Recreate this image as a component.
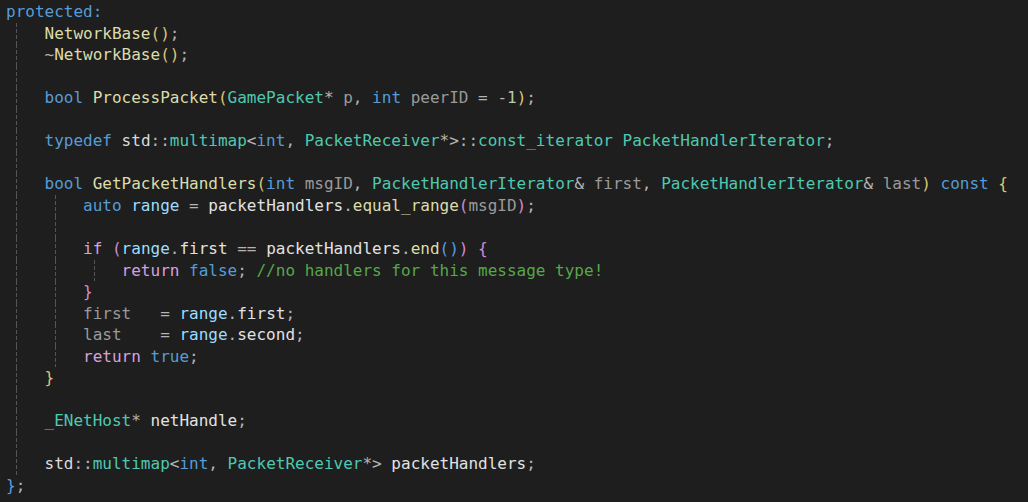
import React from "react";

const C = {
  kw: "text-[#569cd6]",
  ctl: "text-[#d8a0df]",
  fn: "text-[#dcdcaa]",
  ty: "text-[#4ec9b0]",
  par: "text-[#9a9a9a]",
  loc: "text-[#9cdcfe]",
  mem: "text-[#e2e2e2]",
  tx: "text-[#dadada]",
  op: "text-[#b4b4b4]",
  num: "text-[#b5cea8]",
  com: "text-[#57a64a]",
  b1: "text-[#dcc474]",
  b2: "text-[#d28bd0]",
  b3: "text-[#5a9de0]",
};

const GUIDE_POS = {
  0: "left-[10px]",
  4: "left-[49px]",
  8: "left-[88px]",
};

const lines = [
  { g: [], t: [["protected:", "kw"]] },
  { g: [0], t: [["    "], ["NetworkBase", "fn"], ["()", "b1"], [";", "op"]] },
  { g: [0], t: [["    "], ["~", "op"], ["NetworkBase", "fn"], ["()", "b1"], [";", "op"]] },
  { g: [0], t: [] },
  {
    g: [0],
    t: [
      ["    "], ["bool", "kw"], [" "], ["ProcessPacket", "fn"], ["(", "b1"], ["GamePacket", "ty"], ["*", "op"], [" "],
      ["p", "par"], [",", "op"], [" "], ["int", "kw"], [" "], ["peerID", "par"], [" "], ["=", "op"], [" "],
      ["-", "op"], ["1", "num"], [")", "b1"], [";", "op"],
    ],
  },
  { g: [0], t: [] },
  {
    g: [0],
    t: [
      ["    "], ["typedef", "kw"], [" "], ["std", "tx"], ["::", "op"], ["multimap", "ty"], ["<", "op"], ["int", "kw"],
      [",", "op"], [" "], ["PacketReceiver", "ty"], ["*>::", "op"], ["const_iterator", "ty"], [" "],
      ["PacketHandlerIterator", "ty"], [";", "op"],
    ],
  },
  { g: [0], t: [] },
  {
    g: [0],
    t: [
      ["    "], ["bool", "kw"], [" "], ["GetPacketHandlers", "fn"], ["(", "b1"], ["int", "kw"], [" "], ["msgID", "par"],
      [",", "op"], [" "], ["PacketHandlerIterator", "ty"], ["&", "op"], [" "], ["first", "par"], [",", "op"], [" "],
      ["PacketHandlerIterator", "ty"], ["&", "op"], [" "], ["last", "par"], [")", "b1"], [" "], ["const", "kw"], [" "],
      ["{", "b1"],
    ],
  },
  {
    g: [0, 4],
    t: [
      ["        "], ["auto", "kw"], [" "], ["range", "loc"], [" "], ["=", "op"], [" "], ["packetHandlers", "mem"],
      [".", "op"], ["equal_range", "fn"], ["(", "b2"], ["msgID", "par"], [")", "b2"], [";", "op"],
    ],
  },
  { g: [0, 4], t: [] },
  {
    g: [0, 4],
    t: [
      ["        "], ["if", "ctl"], [" "], ["(", "b2"], ["range", "loc"], [".", "op"], ["first", "mem"], [" "], ["==", "op"],
      [" "], ["packetHandlers", "mem"], [".", "op"], ["end", "fn"], ["()", "b3"], [")", "b2"], [" "], ["{", "b2"],
    ],
  },
  {
    g: [0, 4, 8],
    t: [["            "], ["return", "ctl"], [" "], ["false", "kw"], [";", "op"], [" "], ["//no handlers for this message type!", "com"]],
  },
  { g: [0, 4], t: [["        "], ["}", "b2"]] },
  {
    g: [0, 4],
    t: [["        "], ["first", "par"], ["   "], ["=", "op"], [" "], ["range", "loc"], [".", "op"], ["first", "mem"], [";", "op"]],
  },
  {
    g: [0, 4],
    t: [["        "], ["last", "par"], ["    "], ["=", "op"], [" "], ["range", "loc"], [".", "op"], ["second", "mem"], [";", "op"]],
  },
  { g: [0, 4], t: [["        "], ["return", "ctl"], [" "], ["true", "kw"], [";", "op"]] },
  { g: [0], t: [["    "], ["}", "b1"]] },
  { g: [0], t: [] },
  { g: [0], t: [["    "], ["_ENetHost", "ty"], ["*", "op"], [" "], ["netHandle", "mem"], [";", "op"]] },
  { g: [0], t: [] },
  {
    g: [0],
    t: [
      ["    "], ["std", "tx"], ["::", "op"], ["multimap", "ty"], ["<", "op"], ["int", "kw"], [",", "op"], [" "],
      ["PacketReceiver", "ty"], ["*>", "op"], [" "], ["packetHandlers", "mem"], [";", "op"],
    ],
  },
  { g: [], t: [["}", "b3"], [";", "op"]] },
];

function Guide({ col }) {
  return (
    <span
      className={`absolute top-0 bottom-0 w-px ${GUIDE_POS[col]} bg-[image:repeating-linear-gradient(to_bottom,#555555_0px,#555555_4px,transparent_4px,transparent_6px)]`}
    />
  );
}

export default function App() {
  return (
    <div className="w-[1028px] h-[502px] overflow-hidden bg-[#1e1e1e] pt-[1px] pl-[6px] font-['DejaVu_Sans_Mono',monospace] text-[16px] text-[#dadada]">
      {lines.map((line, i) => (
        <div key={i} className="relative h-[21.55px] leading-[21.55px] whitespace-pre">
          {line.g.map((c) => (
            <Guide key={c} col={c} />
          ))}
          <span className="relative">
            {line.t.map(([s, k], j) => (
              <span key={j} className={k ? C[k] : undefined}>
                {s}
              </span>
            ))}
          </span>
        </div>
      ))}
    </div>
  );
}
